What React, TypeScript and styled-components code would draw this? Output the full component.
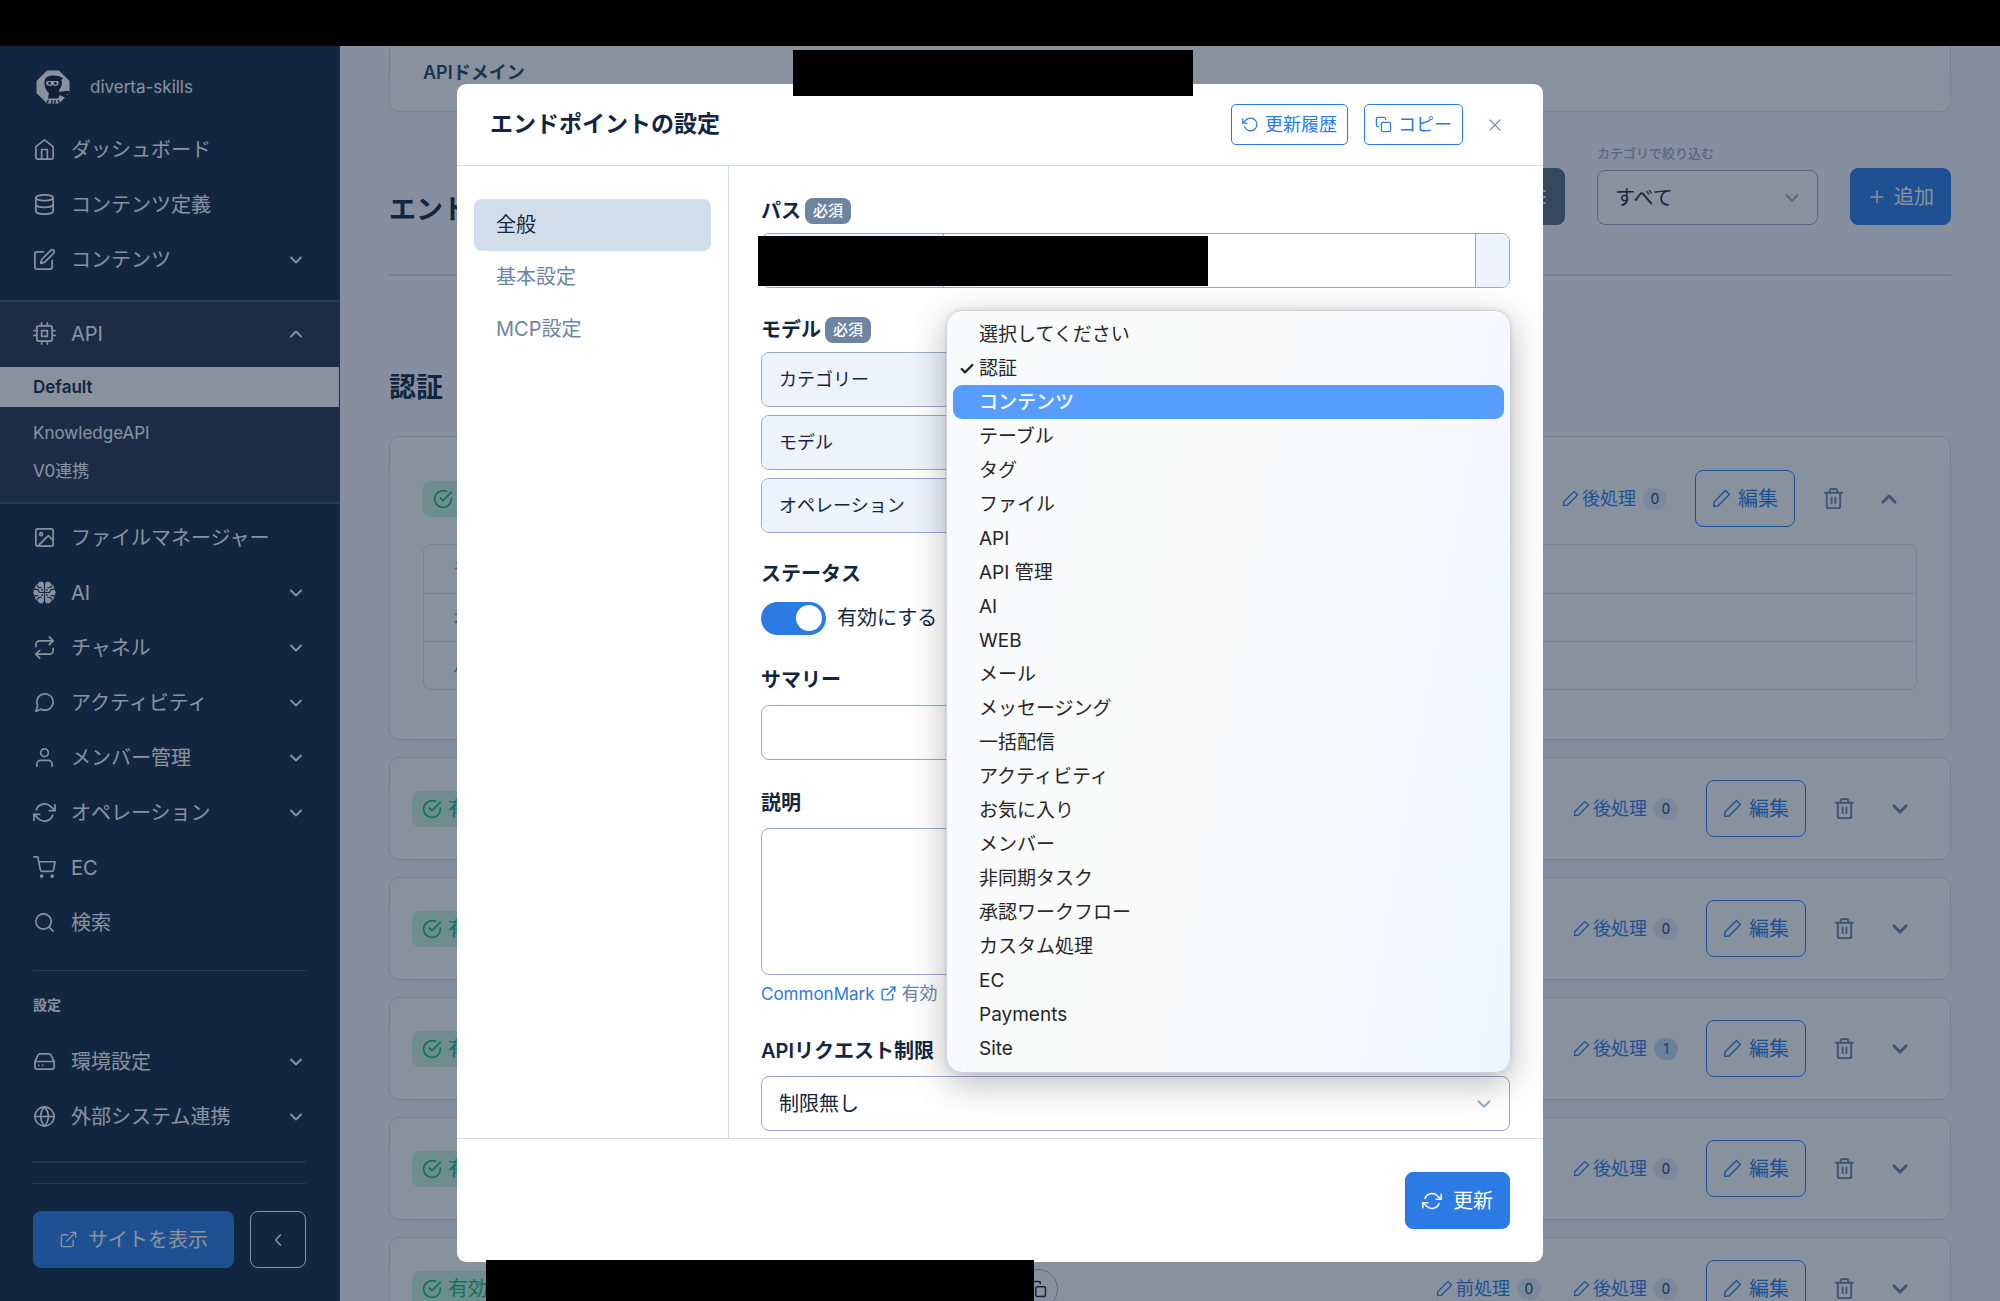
import React, { useState } from 'react';
import styled, { createGlobalStyle, css } from 'styled-components';
import {
  FiHome, FiDatabase, FiEdit, FiCpu, FiImage, FiRepeat, FiMessageCircle, FiUser,
  FiRefreshCw, FiShoppingCart, FiSearch, FiHardDrive, FiGlobe, FiExternalLink,
  FiChevronDown, FiChevronUp, FiChevronLeft, FiCheckCircle, FiTrash2,
  FiPlus, FiCopy, FiRotateCcw, FiX, FiList, FiCheck,
} from 'react-icons/fi';
import { FaChevronDown, FaChevronUp } from 'react-icons/fa';

const c = {
  navy: '#12263f',
  ink: '#283e59',
  blue: '#2c7be5',
  slate: '#6e84a3',
  mist: '#95aac9',
  line: '#d2ddec',
  pale: '#edf2fb',
};

const GlobalStyle = createGlobalStyle`
  *, *::before, *::after { box-sizing: border-box; }
  body {
    margin: 0;
    background: #000;
    color: ${c.navy};
    font-family: Inter, "Noto Sans CJK JP", sans-serif;
    font-size: 20px;
    line-height: 30px;
  }
  button, input, select, textarea { font: inherit; color: inherit; margin: 0; }
  button { cursor: pointer; }
  a { color: inherit; text-decoration: none; }
  h1, h2, ul, p { margin: 0; padding: 0; }
  ul { list-style: none; }
  svg { flex: none; display: block; }
`;

/* ---------- shell ---------- */

const Page = styled.div`
  height: 100vh;
  display: flex;
  flex-direction: column;
  overflow: hidden;
  position: relative;
`;

const TopBar = styled.div`
  flex: none;
  height: 46px;
  background: #000;
`;

const Columns = styled.div`
  flex: 1;
  min-height: 0;
  display: flex;
`;

/* ---------- sidebar ---------- */

const Sidebar = styled.nav`
  flex: none;
  width: 340px;
  overflow: hidden;
  background: ${c.navy};
  border-right: 1px solid #24374f;
  color: #fff;
  white-space: nowrap;
`;

const Brand = styled.a`
  display: flex;
  align-items: center;
  gap: 20px;
  padding: 24px 36px 18px;
  font-size: 17px;
  line-height: 34px;
`;

const NavItem = styled.a`
  display: flex;
  align-items: center;
  gap: 15px;
  height: 55px;
  padding: 0 33px;
  svg { stroke-width: 1.75; }
  svg:nth-of-type(2) { margin-left: auto; stroke-width: 2.25; }
`;

const NavGroup = styled.div`
  margin: 13px 0 6px;
  padding: 4px 0 12px;
  background: #26324d;
  border: solid #46556b;
  border-width: 2px 0;
`;

const SubItem = styled.a<{ $active?: boolean }>`
  display: block;
  padding: 0 33px;
  font-size: 17px;
  line-height: 38px;
  ${p => p.$active && css`
    margin: 6px 0 7px;
    line-height: 40px;
    font-weight: 600;
    background: #fff;
    color: ${c.navy};
  `}
`;

const SideRule = styled.hr<{ $thick?: boolean }>`
  margin: ${p => (p.$thick ? 17 : 20)}px 33px 0;
  border: 0;
  height: ${p => (p.$thick ? 2 : 1)}px;
  background: ${p => (p.$thick ? '#36455f' : '#41516b')};
`;

const SideHeading = styled.p`
  margin: 24px 33px 19px;
  font-size: 14px;
  line-height: 20px;
  font-weight: 600;
`;

const SideFooter = styled.div`
  display: flex;
  gap: 16px;
  padding: 27px 33px;
`;

/* ---------- buttons ---------- */

const Button = styled.button<{ $kind?: 'primary' | 'outline' | 'dark' | 'ghost'; $size?: 'sm' }>`
  display: inline-flex;
  align-items: center;
  justify-content: center;
  flex: none;
  height: ${p => (p.$size === 'sm' ? 41 : 57)}px;
  padding: 0 ${p => (p.$size === 'sm' ? 10 : 16)}px;
  gap: ${p => (p.$size === 'sm' ? 6 : 7)}px;
  font-size: ${p => (p.$size === 'sm' ? 18 : 20)}px;
  border-radius: ${p => (p.$size === 'sm' ? 5 : 8)}px;
  border: 1px solid ${c.blue};
  background: transparent;
  color: ${c.blue};
  svg { stroke-width: 1.75; }
  ${p => p.$kind === 'primary' && css`background: ${c.blue}; color: #fff;`}
  ${p => p.$kind === 'dark' && css`background: #566a7f; border-color: #566a7f; color: #fff;`}
  ${p => p.$kind === 'ghost' && css`border-color: #fff; color: #fff; width: 56px; padding: 0;`}
`;

const SiteButton = styled(Button)`
  flex: 1;
  gap: 10px;
`;

const SubmitButton = styled(Button)`
  gap: 11px;
`;

/* ---------- main ---------- */

const Main = styled.main`
  flex: 1;
  min-width: 0;
  overflow: hidden;
  padding: 0 49px;
  background: #fbf9fe;
`;

const Panel = styled.section`
  background: #fff;
  border: 1px solid ${c.line};
  border-radius: 10px;
  box-shadow: 0 12px 24px rgba(18, 38, 63, 0.04);
`;

const DomainPanel = styled(Panel)`
  height: 66px;
  padding: 12px 33px;
  border-top: 0;
  border-radius: 0 0 10px 10px;
  color: ${c.ink};
  font-size: 18px;
  font-weight: 600;
`;

const Toolbar = styled.div`
  display: flex;
  align-items: flex-end;
  gap: 32px;
  height: 164px;
  padding-bottom: 49px;
  border-bottom: 2px solid ${c.line};
`;

const PageTitle = styled.h1`
  flex: 1;
  font-size: 27px;
  line-height: 30px;
  font-weight: 700;
`;

const Filter = styled.label`
  display: flex;
  flex-direction: column;
  width: 221px;
  gap: 7px;
  font-size: 13px;
  line-height: 20px;
  font-weight: 500;
  color: ${c.mist};
`;

const SelectBox = styled.span`
  display: grid;
  align-items: center;
  > * { grid-area: 1 / 1; }
  > svg { justify-self: end; margin-right: 15px; color: ${c.mist}; pointer-events: none; }
`;

const boxed = css`
  width: 100%;
  height: 55px;
  padding: 0 17px;
  font-size: 20px;
  font-weight: 400;
  color: ${c.navy};
  background: #fff;
  border: 1px solid ${c.mist};
  border-radius: 8px;
  outline: 0;
`;

const Select = styled.select`
  ${boxed}
  appearance: none;
`;

const SectionTitle = styled.h2`
  margin: 95px 0 31px;
  font-size: 27px;
  line-height: 34px;
  font-weight: 700;
`;

const EndpointPanel = styled(Panel)<{ $open?: boolean }>`
  margin-bottom: 17px;
  padding: ${p => (p.$open ? '33px 33px 49px' : '22px')};
`;

const EndpointRow = styled.div`
  display: flex;
  align-items: center;
  height: 57px;
`;

const StatusTag = styled.span`
  display: flex;
  align-items: center;
  gap: 6px;
  height: 36px;
  padding: 0 11px 0 10px;
  border-radius: 8px;
  background: #ccf2df;
  color: #10bf77;
  font-size: 20px;
`;

const EndpointPath = styled.span`
  flex: 0 1 519px;
`;

const CopyRound = styled.button`
  display: grid;
  place-items: center;
  width: 40px;
  height: 40px;
  padding: 0;
  border: 1px solid ${c.mist};
  border-radius: 50%;
  background: transparent;
  color: ${c.navy};
`;

const Actions = styled.div`
  display: flex;
  align-items: center;
  margin-left: auto;
`;

const HookButton = styled.button`
  display: flex;
  align-items: center;
  gap: 3px;
  margin-left: 32px;
  padding: 0;
  border: 0;
  background: none;
  color: ${c.blue};
  font-size: 18px;
  svg { stroke-width: 1.75; }
`;

const Count = styled.span<{ $on: boolean }>`
  width: 24px;
  margin-left: 4px;
  border-radius: 12px;
  font-size: 14px;
  line-height: 22px;
  text-align: center;
  background: ${p => (p.$on ? '#c6dcf9' : '#e3e8f8')};
  color: ${p => (p.$on ? '#2666b8' : c.ink)};
`;

const EditButton = styled(Button)`
  margin-left: 28px;
`;

const IconButton = styled.button<{ $gap: number }>`
  display: grid;
  place-items: center;
  width: 24px;
  height: 40px;
  margin-left: ${p => p.$gap}px;
  padding: 0;
  border: 0;
  background: none;
  color: ${c.slate};
`;

const ActionsEnd = styled.span`
  width: 16px;
`;

const Details = styled.table`
  width: 100%;
  margin-top: 17px;
  border: 1px solid ${c.line};
  border-radius: 8px;
  border-spacing: 0;
  font-size: 17px;
  color: ${c.slate};
  th { height: 48px; padding: 0 29px; text-align: left; font-weight: 400; }
  tr + tr th { border-top: 1px solid ${c.line}; }
`;

/* ---------- modal ---------- */

const Backdrop = styled.div`
  position: absolute;
  inset: 46px 0 0;
  display: flex;
  justify-content: center;
  padding: 38px 24px 39px;
  background: rgba(18, 38, 63, 0.5);
`;

const Dialog = styled.div`
  display: flex;
  flex-direction: column;
  width: 100%;
  max-width: 1086px;
  border-radius: 9px;
  background: #fff;
  overflow: hidden;
`;

const DialogHeader = styled.header`
  display: flex;
  align-items: center;
  gap: 16px;
  height: 82px;
  padding: 0 32px 0 33px;
  border-bottom: 1px solid ${c.line};
`;

const DialogTitle = styled.h2`
  flex: 1;
  font-size: 23px;
  line-height: 30px;
  padding-bottom: 2px;
  font-weight: 700;
`;

const CloseButton = styled.button`
  display: grid;
  place-items: center;
  width: 32px;
  height: 32px;
  padding: 0;
  border: 0;
  background: none;
  color: #8492a8;
`;

const DialogBody = styled.div`
  flex: 1;
  min-height: 0;
  display: flex;
`;

const Tabs = styled.div`
  flex: none;
  width: 272px;
  padding: 33px 17px;
  border-right: 1px solid ${c.line};
`;

const Tab = styled.button<{ $active?: boolean }>`
  display: block;
  width: 100%;
  height: 52px;
  padding: 0 22px;
  border: 0;
  border-radius: 8px;
  text-align: left;
  background: ${p => (p.$active ? c.line : 'transparent')};
  color: ${p => (p.$active ? c.navy : c.slate)};
`;

const Form = styled.form`
  flex: 1;
  min-width: 0;
  overflow: hidden;
  padding: 31px 33px 0 32px;
`;

const Field = styled.div<{ $close?: boolean }>`
  margin-bottom: ${p => (p.$close ? 26 : 28)}px;
`;

const Label = styled.label<{ $required?: boolean }>`
  display: flex;
  align-items: center;
  gap: 4px;
  height: ${p => (p.$required ? 28 : 30)}px;
  margin-bottom: ${p => (p.$required ? 8 : 10)}px;
  font-weight: 600;
`;

const Required = styled.span`
  padding: 0 8px;
  border-radius: 8px;
  background: ${c.slate};
  color: #fff;
  font-size: 15px;
  line-height: 26px;
  font-weight: 500;
`;

const TextInput = styled.input`${boxed}`;

const TextArea = styled.textarea`
  ${boxed}
  display: block;
  height: 147px;
  padding: 12px 17px;
  resize: none;
`;

const Group = styled.div`
  position: relative;
  display: flex;
  height: 55px;
  border: 1px solid ${c.mist};
  border-radius: 8px;
  background: #fff;
`;

const GroupInput = styled.input`
  flex: 1;
  min-width: 0;
  border: 0;
  outline: 0;
  background: transparent;
`;

const Addon = styled.label<{ $width: number; $end?: boolean }>`
  display: flex;
  align-items: center;
  width: ${p => p.$width}px;
  padding-left: 17px;
  background: ${c.pale};
  font-size: 18px;
  border-radius: ${p => (p.$end ? '0 7px 7px 0' : '7px 0 0 7px')};
  border: 0 solid ${c.mist};
  border-width: ${p => (p.$end ? '0 0 0 1px' : '0 1px 0 0')};
`;

const GroupSelect = styled(SelectBox)`
  flex: 1;
  select { border: 0; height: 53px; }
`;

const Stack = styled.div`
  display: flex;
  flex-direction: column;
  gap: 8px;
`;

const SwitchRow = styled.label`
  display: flex;
  align-items: center;
  gap: 11px;
  height: 38px;
`;

const Switch = styled.input`
  appearance: none;
  display: flex;
  align-items: center;
  width: 65px;
  height: 33px;
  padding: 0 4px;
  border-radius: 17px;
  background: ${c.mist};
  &::before {
    content: '';
    width: 26px;
    height: 26px;
    border-radius: 50%;
    background: #fff;
  }
  &:checked { background: ${c.blue}; justify-content: flex-end; }
`;

const Help = styled.p`
  display: flex;
  align-items: center;
  gap: 5px;
  height: 33px;
  padding-top: 4px;
  font-size: 18px;
  color: ${c.slate};
  a { display: flex; align-items: center; gap: 5px; color: ${c.blue}; font-size: 17px; }
`;

const DialogFooter = styled.footer`
  flex: none;
  display: flex;
  justify-content: flex-end;
  padding: 33px;
  border-top: 1px solid ${c.line};
`;

/* ---------- option menu ---------- */

const Menu = styled.ul`
  position: absolute;
  z-index: 2;
  top: -43px;
  left: 184px;
  right: -2px;
  padding: 6px 6px 7px;
  border: 1px solid #cfd2d6;
  border-radius: 16px;
  background: linear-gradient(100deg, #f9fafc 0%, #fafafa 45%, #f6f8fd 75%, #eff5ff 100%);
  box-shadow: 0 10px 36px rgba(0, 0, 0, 0.28), 0 0 4px rgba(0, 0, 0, 0.12);
  color: #262626;
  font-size: 19px;
`;

const Option = styled.li<{ $hot?: boolean }>`
  display: grid;
  grid-template-columns: 14px 1fr;
  align-items: center;
  gap: 6px;
  height: 34px;
  padding: 2px 0 0 6px;
  border-radius: 9px;
  cursor: default;
  span { grid-column: 2; grid-row: 1; }
  svg { grid-column: 1; grid-row: 1; stroke-width: 3.5; }
  ${p => p.$hot && css`background: #579dff; color: #fff; font-weight: 500;`}
`;

const Mask = styled.div<{ $w: number; $h: number; $top?: string; $left: string; $bottom?: string }>`
  position: absolute;
  z-index: 1;
  width: ${p => p.$w}px;
  height: ${p => p.$h}px;
  top: ${p => p.$top ?? 'auto'};
  left: ${p => p.$left};
  bottom: ${p => p.$bottom ?? 'auto'};
  background: #000;
`;

/* ---------- drawings ---------- */

const Logo = () => (
  <svg width="34" height="34" viewBox="0 0 34 34" aria-hidden="true">
    <path d="M11 0.5H23L33.5 11V23L23 33.5H11L0.5 23V11Z" fill="#fff" />
    <path d="M8.500 11Q9 6 16 5.500 23 5 27 8L25.500 10Q27 15 23 20L23.500 22Q28 20.500 33.500 21V24L30 24.500 33 26 31 28Q28 27.500 24 25L22 28.500H12L13 23Q8 19 8.500 11Z" fill="#101a2c" />
    <path d="M10 13.500Q9.500 11 12 11H21Q23.500 11 22.500 14 21 16.500 18.500 16L16.500 15 14.500 16Q11 16.500 10 13.500Z" fill="#fff" />
    <circle cx="13.500" cy="13.400" r="1.300" fill="#101a2c" />
    <circle cx="19.300" cy="13.400" r="1.300" fill="#101a2c" />
    <path d="M12.500 30L11 33M16 30V33.500M19 30V33.500M22 30L23.500 33" stroke="#101a2c" strokeWidth="1.500" />
  </svg>
);

const Brain = () => (
  <svg width="23" height="23" viewBox="0 0 24 24" aria-hidden="true">
    <path
      fill="currentColor"
      d="M11.500 2.800V21.200L10 23H6.800L4.800 20.400 2.600 18.800 2.300 15.800.3 12 2.300 8.200 2.600 5.200 4.800 3.600 6.800 1H10ZM12.500 2.800 14 1H17.200L19.200 3.600 21.400 5.200 21.700 8.200 23.700 12 21.700 15.800 21.400 18.800 19.200 20.400 17.200 23H14L12.500 21.200Z"
      stroke="currentColor"
      strokeWidth="0.5"
      strokeLinejoin="round"
    />
    <g fill="none" stroke={c.navy} strokeWidth="1.2" strokeLinecap="round" strokeLinejoin="round">
      <path d="M12 2V22" />
      <path d="M4.500 5.200 6.500 7H8.800M2.500 8.800H5L6.800 12H17.200L19 8.800H21.500M19.500 5.200 17.500 7H15.200" />
      <path d="M4.500 18.800 6.500 17H8.800M2.500 15.200H5M19.500 18.800 17.500 17H15.200M21.500 15.200H19M9 9.200H10M14 9.200H15M9 14.800H10M14 14.800H15" />
    </g>
  </svg>
);

const Pencil = ({ size }: { size: number }) => (
  <svg
    width={size} height={size} viewBox="0 0 24 24" fill="none" stroke="currentColor"
    strokeLinecap="round" strokeLinejoin="round" aria-hidden="true"
  >
    <polygon points="17 2 22 7 7.500 21.500 2 22 2.500 16.500 17 2" />
  </svg>
);

/* ---------- data ---------- */

type Nav = { label: string; icon: React.ComponentType<{ size?: number }>; more?: boolean };

const navTop: Nav[] = [
  { label: 'ダッシュボード', icon: FiHome },
  { label: 'コンテンツ定義', icon: FiDatabase },
  { label: 'コンテンツ', icon: FiEdit, more: true },
];
const navMiddle: Nav[] = [
  { label: 'ファイルマネージャー', icon: FiImage },
  { label: 'AI', icon: Brain, more: true },
  { label: 'チャネル', icon: FiRepeat, more: true },
  { label: 'アクティビティ', icon: FiMessageCircle, more: true },
  { label: 'メンバー管理', icon: FiUser, more: true },
  { label: 'オペレーション', icon: FiRefreshCw, more: true },
  { label: 'EC', icon: FiShoppingCart },
  { label: '検索', icon: FiSearch },
];
const navSettings: Nav[] = [
  { label: '環境設定', icon: FiHardDrive, more: true },
  { label: '外部システム連携', icon: FiGlobe, more: true },
];

const options = [
  '選択してください', '認証', 'コンテンツ', 'テーブル', 'タグ', 'ファイル', 'API', 'API 管理', 'AI', 'WEB',
  'メール', 'メッセージング', '一括配信', 'アクティビティ', 'お気に入り', 'メンバー', '非同期タスク',
  '承認ワークフロー', 'カスタム処理', 'EC', 'Payments', 'Site',
];

type Endpoint = { post: number; pre?: number; open?: boolean };
const endpoints: Endpoint[] = [
  { post: 0, open: true }, { post: 0 }, { post: 0 }, { post: 1 }, { post: 0 }, { post: 0, pre: 0 },
];

/* ---------- parts ---------- */

const NavList = ({ items }: { items: Nav[] }) => (
  <>
    {items.map(({ label, icon: Icon, more }) => (
      <NavItem href="#" key={label}>
        <Icon size={23} />
        {label}
        {more && <FiChevronDown size={20} />}
      </NavItem>
    ))}
  </>
);

const Hook = ({ label, count }: { label: string; count: number }) => (
  <HookButton type="button">
    <Pencil size={17} />
    {label}
    <Count $on={count > 0}>{count}</Count>
  </HookButton>
);

const EndpointCard = ({ post, pre, open }: Endpoint) => (
  <EndpointPanel $open={open}>
    <EndpointRow>
      <StatusTag><FiCheckCircle size={20} />有効</StatusTag>
      <EndpointPath />
      <CopyRound type="button" aria-label="コピー"><FiCopy size={18} /></CopyRound>
      <Actions>
        {pre !== undefined && <Hook label="前処理" count={pre} />}
        <Hook label="後処理" count={post} />
        <EditButton type="button"><Pencil size={19} />編集</EditButton>
        <IconButton type="button" $gap={26} aria-label="削除"><FiTrash2 size={23} /></IconButton>
        <IconButton type="button" $gap={32} aria-label="開閉">
          {open ? <FaChevronUp size={18} /> : <FaChevronDown size={18} />}
        </IconButton>
        <ActionsEnd />
      </Actions>
    </EndpointRow>
    {open && (
      <Details>
        <tbody>
          {['モデル', 'オペレーション', 'パラメータ'].map(name => (
            <tr key={name}><th scope="row">{name}</th></tr>
          ))}
        </tbody>
      </Details>
    )}
  </EndpointPanel>
);

export default function App() {
  const [enabled, setEnabled] = useState(true);
  const [hot, setHot] = useState('コンテンツ');

  return (
    <>
      <GlobalStyle />
      <Page>
        <TopBar />
        <Columns>
          <Sidebar>
            <Brand href="#"><Logo />diverta-skills</Brand>
            <NavList items={navTop} />
            <NavGroup>
              <NavItem href="#"><FiCpu size={23} />API<FiChevronUp size={20} /></NavItem>
              <SubItem href="#" $active>Default</SubItem>
              <SubItem href="#">KnowledgeAPI</SubItem>
              <SubItem href="#">V0連携</SubItem>
            </NavGroup>
            <NavList items={navMiddle} />
            <SideRule />
            <SideHeading>設定</SideHeading>
            <NavList items={navSettings} />
            <SideRule $thick />
            <SideRule />
            <SideFooter>
              <SiteButton type="button" $kind="primary"><FiExternalLink size={19} />サイトを表示</SiteButton>
              <Button type="button" $kind="ghost" aria-label="閉じる"><FiChevronLeft size={20} /></Button>
            </SideFooter>
          </Sidebar>

          <Main>
            <DomainPanel>APIドメイン</DomainPanel>
            <Toolbar>
              <PageTitle>エンド</PageTitle>
              <Button type="button" $kind="dark" aria-label="一覧"><FiList size={24} /></Button>
              <Filter>
                カテゴリで絞り込む
                <SelectBox>
                  <Select><option>すべて</option></Select>
                  <FiChevronDown size={22} />
                </SelectBox>
              </Filter>
              <Button type="button" $kind="primary"><FiPlus size={20} />追加</Button>
            </Toolbar>
            <SectionTitle>認証</SectionTitle>
            {endpoints.map((e, i) => <EndpointCard key={i} {...e} />)}
          </Main>
        </Columns>

        <Backdrop>
          <Dialog role="dialog" aria-labelledby="dialog-title">
            <DialogHeader>
              <DialogTitle id="dialog-title">エンドポイントの設定</DialogTitle>
              <Button type="button" $size="sm"><FiRotateCcw size={17} />更新履歴</Button>
              <Button type="button" $size="sm"><FiCopy size={17} />コピー</Button>
              <CloseButton type="button" aria-label="閉じる"><FiX size={20} strokeWidth={1.5} /></CloseButton>
            </DialogHeader>
            <DialogBody>
              <Tabs>
                <Tab type="button" $active>全般</Tab>
                <Tab type="button">基本設定</Tab>
                <Tab type="button">MCP設定</Tab>
              </Tabs>
              <Form>
                <Field>
                  <Label $required htmlFor="path">パス<Required>必須</Required></Label>
                  <Group>
                    <Addon $width={182} htmlFor="path" />
                    <GroupInput id="path" />
                    <Addon $width={34} $end htmlFor="path" />
                    <Mask $w={450} $h={50} $top="2px" $left="-4px" />
                  </Group>
                </Field>
                <Field $close>
                  <Label $required htmlFor="category">モデル<Required>必須</Required></Label>
                  <Stack>
                    <Group>
                      <Addon $width={186} htmlFor="category">カテゴリー</Addon>
                      <GroupSelect><Select id="category"><option>認証</option></Select></GroupSelect>
                      <Menu role="listbox" aria-label="カテゴリー">
                        {options.map(name => (
                          <Option
                            key={name}
                            role="option"
                            aria-selected={name === '認証'}
                            $hot={name === hot}
                            onMouseEnter={() => setHot(name)}
                          >
                            {name === '認証' && <FiCheck size={16} />}
                            <span>{name}</span>
                          </Option>
                        ))}
                      </Menu>
                    </Group>
                    <Group>
                      <Addon $width={186} htmlFor="model">モデル</Addon>
                      <GroupSelect><Select id="model" /></GroupSelect>
                    </Group>
                    <Group>
                      <Addon $width={186} htmlFor="operation">オペレーション</Addon>
                      <GroupSelect><Select id="operation" /></GroupSelect>
                    </Group>
                  </Stack>
                </Field>
                <Field>
                  <Label htmlFor="status">ステータス</Label>
                  <SwitchRow>
                    <Switch id="status" type="checkbox" checked={enabled} onChange={e => setEnabled(e.target.checked)} />
                    有効にする
                  </SwitchRow>
                </Field>
                <Field>
                  <Label htmlFor="summary">サマリー</Label>
                  <TextInput id="summary" />
                </Field>
                <Field>
                  <Label htmlFor="description">説明</Label>
                  <TextArea id="description" />
                  <Help><a href="#">CommonMark<FiExternalLink size={17} /></a>有効</Help>
                </Field>
                <Field>
                  <Label htmlFor="limit">APIリクエスト制限</Label>
                  <SelectBox>
                    <Select id="limit"><option>制限無し</option></Select>
                    <FiChevronDown size={22} />
                  </SelectBox>
                </Field>
              </Form>
            </DialogBody>
            <DialogFooter>
              <SubmitButton type="button" $kind="primary"><FiRefreshCw size={20} />更新</SubmitButton>
            </DialogFooter>
          </Dialog>
        </Backdrop>

        <Mask $w={400} $h={46} $top="50px" $left="calc(50% - 207px)" />
        <Mask $w={548} $h={41} $bottom="0" $left="calc(50% - 514px)" />
      </Page>
    </>
  );
}
